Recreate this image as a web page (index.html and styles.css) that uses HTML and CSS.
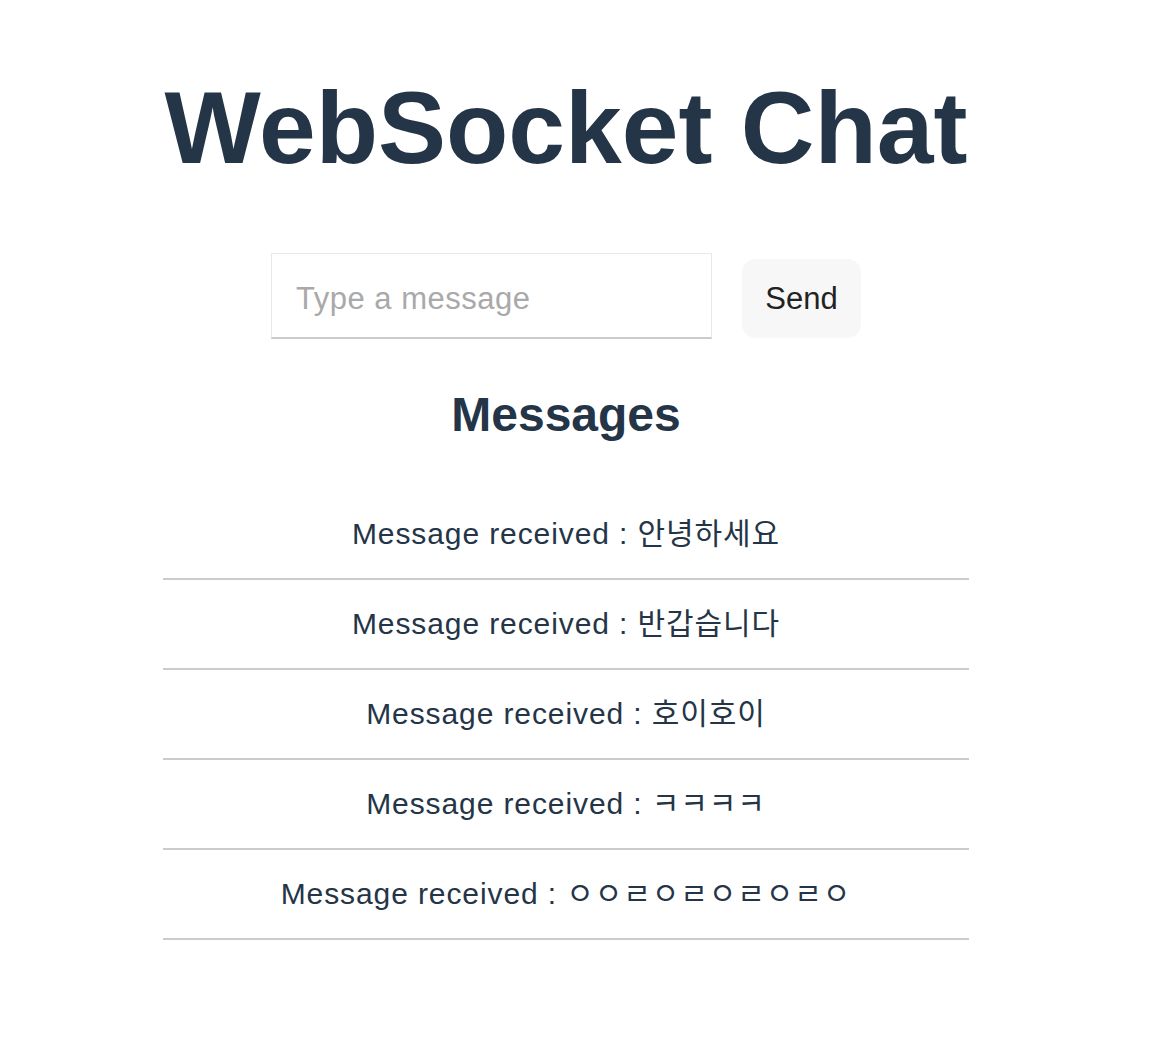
FILE: index.html
```html
<!DOCTYPE html>
<html lang="ko">
<head>
<meta charset="utf-8">
<title>WebSocket Chat</title>
<link rel="stylesheet" href="styles.css">
</head>
<body>
<div class="app">
  <h1 class="title">WebSocket Chat</h1>
  <form class="composer" onsubmit="return false;">
    <input class="composer-input" type="text" placeholder="Type a message">
    <button class="composer-send" type="submit">Send</button>
  </form>
  <h2 class="messages-title">Messages</h2>
  <ul class="messages">
    <li class="message">Message received : 안녕하세요</li>
    <li class="message">Message received : 반갑습니다</li>
    <li class="message">Message received : 호이호이</li>
    <li class="message">Message received : ㅋㅋㅋㅋ</li>
    <li class="message">Message received : ㅇㅇㄹㅇㄹㅇㄹㅇㄹㅇ</li>
  </ul>
</div>
</body>
</html>
```

FILE: styles.css
```css
html, body {
  margin: 0;
  padding: 0;
  background: #ffffff;
}

body {
  font-family: "Liberation Sans", Arial, "Noto Sans CJK KR", sans-serif;
  color: #253548;
}

.app {
  margin-left: 163px;
  width: 806px;
  padding-top: 68px;
}

.title {
  margin: 0;
  font-size: 102px;
  line-height: 120px;
  font-weight: bold;
  text-align: center;
}

.composer {
  display: flex;
  justify-content: center;
  align-items: flex-end;
  gap: 30px;
  margin: 65px 0 0;
}

.composer-input {
  box-sizing: border-box;
  width: 441px;
  height: 86px;
  margin: 0;
  padding: 6px 24px 0;
  border: 1px solid #e8e8e8;
  border-bottom: 2px solid #cbcbcb;
  border-radius: 0;
  outline: none;
  font-family: "Liberation Sans", Arial, sans-serif;
  font-size: 31px;
  letter-spacing: 0.5px;
  color: #222;
  background: #fff;
}

.composer-input::placeholder {
  color: #a9a9a9;
}

.composer-send {
  box-sizing: border-box;
  width: 119px;
  height: 79px;
  margin: 0 0 1px;
  padding: 0;
  border: none;
  border-radius: 14px;
  background: #f7f7f7;
  font-family: "Liberation Sans", Arial, sans-serif;
  font-size: 31px;
  color: #222;
}

.messages-title {
  margin: 48px 0 0;
  font-size: 48px;
  line-height: 56px;
  font-weight: bold;
  text-align: center;
}

.messages {
  list-style: none;
  margin: 47px 0 0;
  padding: 0;
}

.message {
  height: 88px;
  line-height: 88px;
  border-bottom: 2px solid #cccccc;
  font-size: 30px;
  letter-spacing: 0.9px;
  text-align: center;
  white-space: nowrap;
}
```
